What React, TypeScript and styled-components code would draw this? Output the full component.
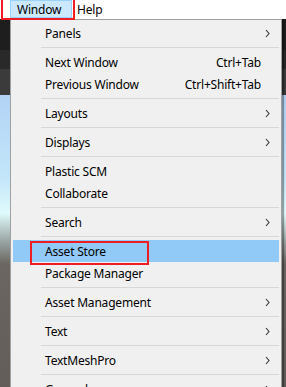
import React from 'react';
import styled, { createGlobalStyle } from 'styled-components';

const GlobalStyle = createGlobalStyle`
  html, body {
    margin: 0;
    padding: 0;
    width: 286px;
    height: 387px;
    overflow: hidden;
    background: #fff;
  }
  body {
    font-family: 'Noto Sans', 'Liberation Sans', sans-serif;
    font-size: 12px;
    letter-spacing: -0.2px;
    color: #000;
  }
`;

const Screen = styled.div`
  display: flex;
  flex-direction: column;
  width: 286px;
  height: 387px;
`;

const MenuBar = styled.div`
  position: relative;
  display: flex;
  height: 19px;
  padding-left: 10px;
  background: #fff;
`;

const BarItem = styled.div<{ $open?: boolean; $width?: number }>`
  display: flex;
  align-items: center;
  box-sizing: border-box;
  height: 18px;
  padding-left: ${p => (p.$open ? 6 : 4)}px;
  width: ${p => (p.$width ? `${p.$width}px` : 'auto')};
  background: ${p => (p.$open ? '#cce8ff' : 'transparent')};
  border: 1px solid ${p => (p.$open ? '#99d1ff' : 'transparent')};
`;

const Callout = styled.div<{ $left: number; $top: number; $width: number; $height: number }>`
  position: absolute;
  left: ${p => p.$left}px;
  top: ${p => p.$top}px;
  width: ${p => p.$width}px;
  height: ${p => p.$height}px;
  box-sizing: border-box;
  border: 2px solid #ee1d23;
  pointer-events: none;
`;

const Workspace = styled.div`
  flex: 1;
  display: flex;
  min-height: 0;
  overflow: hidden;
  padding: 0 4px 0 10px;
  background: linear-gradient(
    to bottom,
    #1e1e1e 0px,
    #1e1e1e 31px,
    #292929 31px,
    #292929 50px,
    #3b3b3b 50px,
    #3b3b3b 76px,
    #b3d3f6 76px,
    #c4e6f9 160px,
    #e0fbfc 194px,
    #9aa6a4 222px,
    #6b6661 245px,
    #625d58 100%
  );
`;

const Menu = styled.div`
  flex: 1;
  align-self: flex-start;
  box-sizing: border-box;
  padding: 2px 2px 0 2px;
  background: #f0f0f0;
  border: 1px solid #a0a0a0;
  border-bottom: none;
  box-shadow: 2px 0 1px rgba(0, 0, 0, 0.35);
`;

const Item = styled.div<{ $active?: boolean }>`
  position: relative;
  display: flex;
  align-items: center;
  height: 22px;
  padding: 0 9px 0 32px;
  background: ${p => (p.$active ? '#91c9f7' : 'transparent')};
  white-space: nowrap;
`;

const Label = styled.span`
  flex: 1;
`;

const Shortcut = styled.span`
  margin-right: 9px;
`;

const Separator = styled.div`
  height: 7px;
  margin-left: 28px;
  display: flex;
  align-items: center;
  &::after {
    content: '';
    flex: 1;
    height: 1px;
    background: #d7d7d7;
  }
`;

const Chevron = () => (
  <svg width="5" height="9" viewBox="0 0 5 9">
    <path d="M1 1 L4 4.5 L1 8" fill="none" stroke="#333" strokeWidth="1.1" />
  </svg>
);

type Entry =
  | { sep: true }
  | { label: string; shortcut?: string; sub?: boolean; active?: boolean; callout?: boolean };

const entries: Entry[] = [
  { label: 'Panels', sub: true },
  { sep: true },
  { label: 'Next Window', shortcut: 'Ctrl+Tab' },
  { label: 'Previous Window', shortcut: 'Ctrl+Shift+Tab' },
  { sep: true },
  { label: 'Layouts', sub: true },
  { sep: true },
  { label: 'Displays', sub: true },
  { sep: true },
  { label: 'Plastic SCM' },
  { label: 'Collaborate' },
  { sep: true },
  { label: 'Search', sub: true },
  { sep: true },
  { label: 'Asset Store', active: true, callout: true },
  { label: 'Package Manager' },
  { sep: true },
  { label: 'Asset Management', sub: true },
  { sep: true },
  { label: 'Text', sub: true },
  { sep: true },
  { label: 'TextMeshPro', sub: true },
  { sep: true },
  { label: 'General', sub: true },
];

export default function App() {
  return (
    <>
      <GlobalStyle />
      <Screen>
        <MenuBar>
          <BarItem $open $width={62}>Window</BarItem>
          <BarItem>Help</BarItem>
          <Callout $left={1} $top={-2} $width={74} $height={22} />
        </MenuBar>
        <Workspace>
          <Menu>
            {entries.map((e, i) =>
              'sep' in e ? (
                <Separator key={i} />
              ) : (
                <Item key={i} $active={e.active}>
                  <Label>{e.label}</Label>
                  {e.shortcut && <Shortcut>{e.shortcut}</Shortcut>}
                  {e.sub && <Chevron />}
                  {e.callout && <Callout $left={17} $top={1} $width={119} $height={24} />}
                </Item>
              )
            )}
          </Menu>
        </Workspace>
      </Screen>
    </>
  );
}
